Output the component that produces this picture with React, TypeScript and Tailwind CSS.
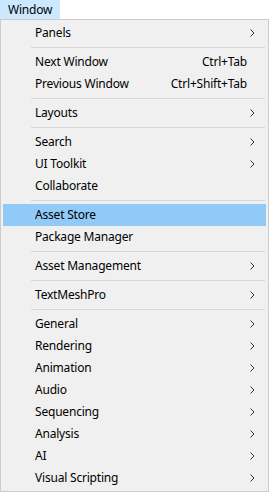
type Entry =
  | { kind: "item"; label: string; shortcut?: string; submenu?: boolean; active?: boolean }
  | { kind: "sep" };

const entries: Entry[] = [
  { kind: "item", label: "Panels", submenu: true },
  { kind: "sep" },
  { kind: "item", label: "Next Window", shortcut: "Ctrl+Tab" },
  { kind: "item", label: "Previous Window", shortcut: "Ctrl+Shift+Tab" },
  { kind: "sep" },
  { kind: "item", label: "Layouts", submenu: true },
  { kind: "sep" },
  { kind: "item", label: "Search", submenu: true },
  { kind: "item", label: "UI Toolkit", submenu: true },
  { kind: "item", label: "Collaborate" },
  { kind: "sep" },
  { kind: "item", label: "Asset Store", active: true },
  { kind: "item", label: "Package Manager" },
  { kind: "sep" },
  { kind: "item", label: "Asset Management", submenu: true },
  { kind: "sep" },
  { kind: "item", label: "TextMeshPro", submenu: true },
  { kind: "sep" },
  { kind: "item", label: "General", submenu: true },
  { kind: "item", label: "Rendering", submenu: true },
  { kind: "item", label: "Animation", submenu: true },
  { kind: "item", label: "Audio", submenu: true },
  { kind: "item", label: "Sequencing", submenu: true },
  { kind: "item", label: "Analysis", submenu: true },
  { kind: "item", label: "AI", submenu: true },
  { kind: "item", label: "Visual Scripting", submenu: true },
];

function Chevron() {
  return (
    <svg width="5" height="8" viewBox="0 0 5 8" className="shrink-0">
      <polyline points="0.5,0.5 4,4 0.5,7.5" fill="none" stroke="#333" strokeWidth="1" />
    </svg>
  );
}

export default function App() {
  return (
    <div className="w-[269px] h-[492px] bg-white text-black text-[12px] tracking-[-0.2px] font-['Noto_Sans',sans-serif] leading-none overflow-hidden">
      {/* menu bar */}
      <div className="h-[19px] flex">
        <div className="h-full px-[7px] flex items-center bg-[#cce8ff] border border-[#cce8ff]">Window</div>
      </div>

      {/* dropdown */}
      <div className="border border-[#cccccc] bg-[#f0f0f0] p-[2px] h-[473px]">
        {entries.map((e, i) =>
          e.kind === "sep" ? (
            <div key={i} className="h-[7px] flex items-center pl-[28px] pr-[1px]">
              <div className="h-px w-full bg-[#d7d7d7]" />
            </div>
          ) : (
            <div
              key={i}
              className={
                "h-[22px] flex items-center pl-[32px] pr-[11px] " +
                (e.active ? "bg-[#91c9f7]" : "")
              }
            >
              <span className="flex-1 whitespace-nowrap">{e.label}</span>
              {e.shortcut && <span className="whitespace-nowrap mr-[8px]">{e.shortcut}</span>}
              {e.submenu && <Chevron />}
            </div>
          )
        )}
      </div>
    </div>
  );
}
